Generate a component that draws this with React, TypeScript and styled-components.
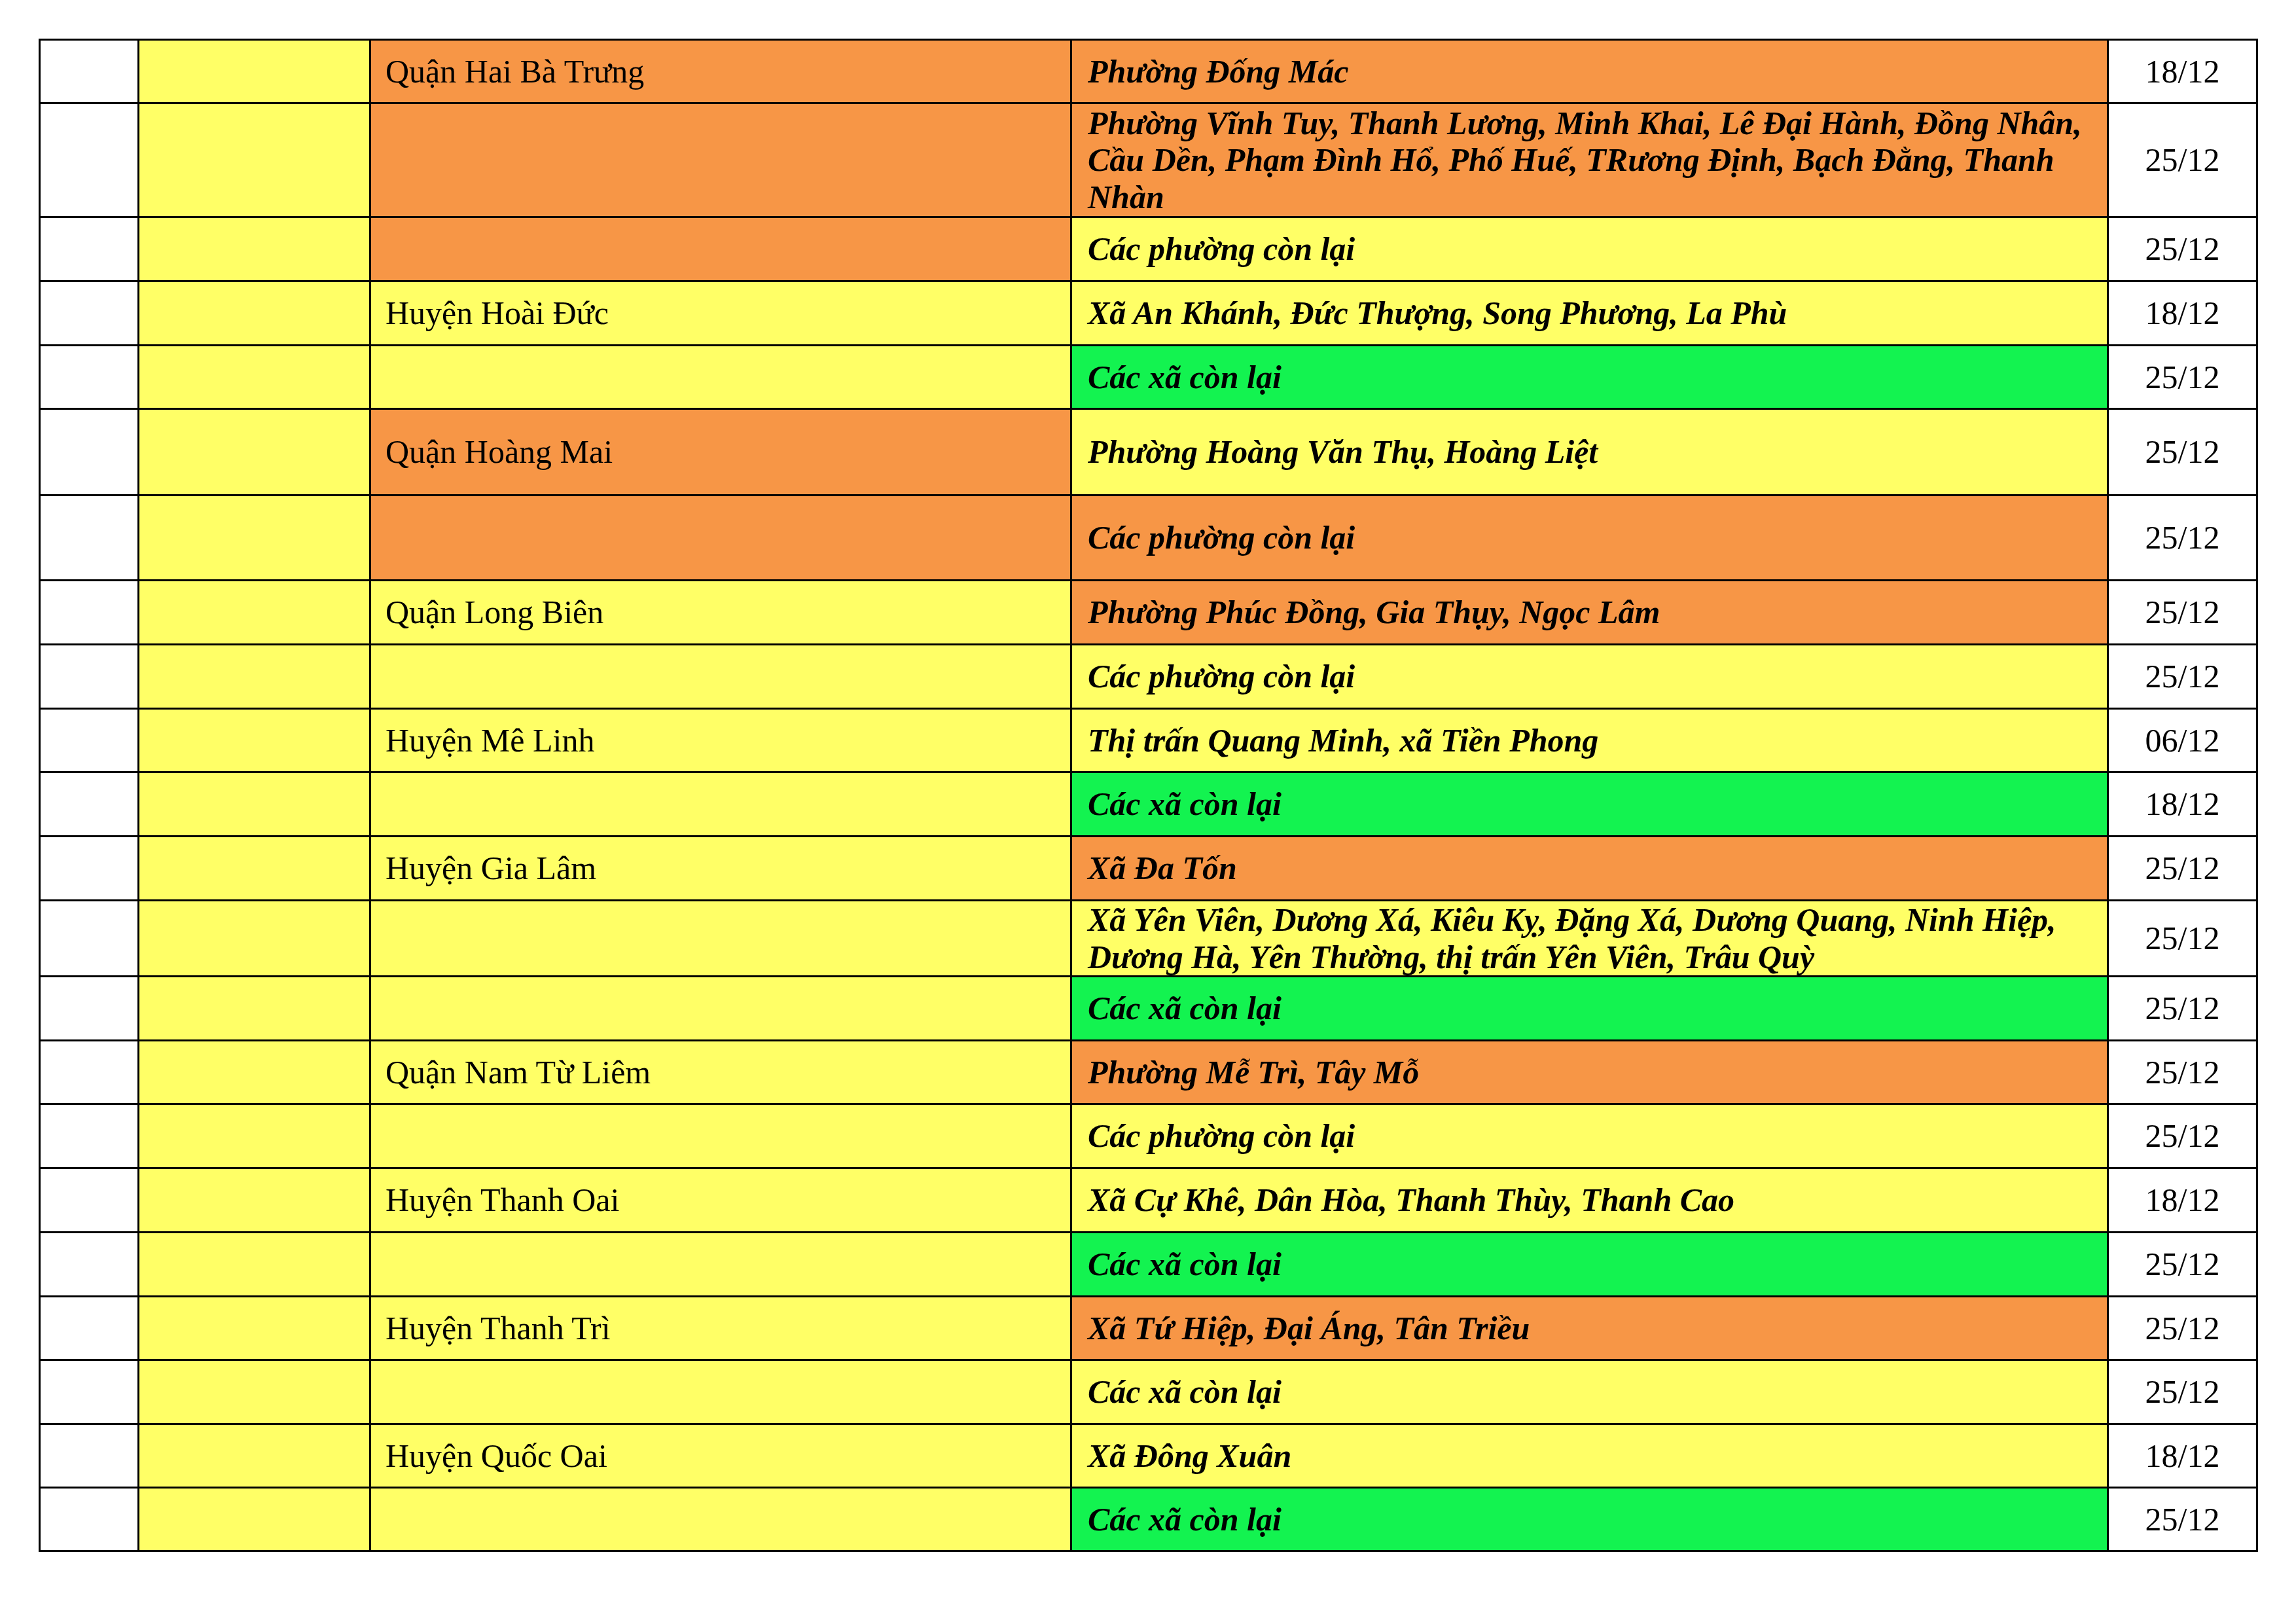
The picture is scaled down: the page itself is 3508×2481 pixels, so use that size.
import React from "react";
import styled, { createGlobalStyle } from "styled-components";

const YELLOW = "#ffff66";
const ORANGE = "#f79646";
const GREEN = "#13f350";
const WHITE = "#ffffff";

const GlobalStyle = createGlobalStyle`
  html, body {
    margin: 0;
    padding: 0;
    background: #fff;
  }
  body {
    font-family: "Liberation Serif", "Times New Roman", serif;
    color: #000;
  }
`;

const Page = styled.div`
  width: 3508px;
  height: 2481px;
  box-sizing: border-box;
  padding: 59px 0 0 59px;
  background: #fff;
`;

const Sheet = styled.table`
  border-collapse: collapse;
  table-layout: fixed;
  width: 3388px;
`;

const Row = styled.tr<{ $h: number }>`
  height: ${(p) => p.$h}px;
`;

const Cell = styled.td<{ $bg: string }>`
  border: 3px solid #000;
  background: ${(p) => p.$bg};
  padding: 0 22px;
  vertical-align: middle;
  font-size: 50px;
  line-height: 56.5px;
  overflow: hidden;
`;

const WardCell = styled(Cell)`
  font-weight: 700;
  font-style: italic;
  padding: 0 24px;
`;

const DateCell = styled(Cell)`
  text-align: center;
  padding: 0;
`;

type Line = {
  district: string;
  districtBg: string;
  ward: string;
  wardBg: string;
  date: string;
  h: number;
};

const rows: Line[] = [
  { district: "Quận Hai Bà Trưng", districtBg: ORANGE, ward: "Phường Đống Mác", wardBg: ORANGE, date: "18/12", h: 97 },
  {
    district: "",
    districtBg: ORANGE,
    ward: "Phường Vĩnh Tuy, Thanh Lương, Minh Khai, Lê Đại Hành, Đồng Nhân, Cầu Dền, Phạm Đình Hổ, Phố Huế, TRương Định, Bạch Đằng, Thanh Nhàn",
    wardBg: ORANGE,
    date: "25/12",
    h: 174,
  },
  { district: "", districtBg: ORANGE, ward: "Các phường còn lại", wardBg: YELLOW, date: "25/12", h: 98 },
  { district: "Huyện Hoài Đức", districtBg: YELLOW, ward: "Xã An Khánh, Đức Thượng, Song Phương, La Phù", wardBg: YELLOW, date: "18/12", h: 98 },
  { district: "", districtBg: YELLOW, ward: "Các xã còn lại", wardBg: GREEN, date: "25/12", h: 97 },
  { district: "Quận Hoàng Mai", districtBg: ORANGE, ward: "Phường Hoàng Văn Thụ, Hoàng Liệt", wardBg: YELLOW, date: "25/12", h: 132 },
  { district: "", districtBg: ORANGE, ward: "Các phường còn lại", wardBg: ORANGE, date: "25/12", h: 130 },
  { district: "Quận Long Biên", districtBg: YELLOW, ward: "Phường Phúc Đồng, Gia Thụy, Ngọc Lâm", wardBg: ORANGE, date: "25/12", h: 98 },
  { district: "", districtBg: YELLOW, ward: "Các phường còn lại", wardBg: YELLOW, date: "25/12", h: 98 },
  { district: "Huyện Mê Linh", districtBg: YELLOW, ward: "Thị trấn Quang Minh, xã Tiền Phong", wardBg: YELLOW, date: "06/12", h: 97 },
  { district: "", districtBg: YELLOW, ward: "Các xã còn lại", wardBg: GREEN, date: "18/12", h: 98 },
  { district: "Huyện Gia Lâm", districtBg: YELLOW, ward: "Xã Đa Tốn", wardBg: ORANGE, date: "25/12", h: 98 },
  {
    district: "",
    districtBg: YELLOW,
    ward: "Xã Yên Viên, Dương Xá, Kiêu Kỵ, Đặng Xá, Dương Quang, Ninh Hiệp, Dương Hà, Yên Thường, thị trấn Yên Viên, Trâu Quỳ",
    wardBg: YELLOW,
    date: "25/12",
    h: 116,
  },
  { district: "", districtBg: YELLOW, ward: "Các xã còn lại", wardBg: GREEN, date: "25/12", h: 98 },
  { district: "Quận Nam Từ Liêm", districtBg: YELLOW, ward: "Phường Mễ Trì, Tây Mỗ", wardBg: ORANGE, date: "25/12", h: 97 },
  { district: "", districtBg: YELLOW, ward: "Các phường còn lại", wardBg: YELLOW, date: "25/12", h: 98 },
  { district: "Huyện Thanh Oai", districtBg: YELLOW, ward: "Xã Cự Khê, Dân Hòa, Thanh Thùy, Thanh Cao", wardBg: YELLOW, date: "18/12", h: 98 },
  { district: "", districtBg: YELLOW, ward: "Các xã còn lại", wardBg: GREEN, date: "25/12", h: 98 },
  { district: "Huyện Thanh Trì", districtBg: YELLOW, ward: "Xã Tứ Hiệp, Đại Áng, Tân Triều", wardBg: ORANGE, date: "25/12", h: 97 },
  { district: "", districtBg: YELLOW, ward: "Các xã còn lại", wardBg: YELLOW, date: "25/12", h: 98 },
  { district: "Huyện Quốc Oai", districtBg: YELLOW, ward: "Xã Đông Xuân", wardBg: YELLOW, date: "18/12", h: 97 },
  { district: "", districtBg: YELLOW, ward: "Các xã còn lại", wardBg: GREEN, date: "25/12", h: 97 },
];

const App = () => {
  return (
    <Page>
      <GlobalStyle />
      <Sheet>
        <colgroup>
          <col width={151} />
          <col width={354} />
          <col width={1071} />
          <col width={1584} />
          <col width={228} />
        </colgroup>
        <tbody>
          {rows.map((r, i) => (
            <Row key={i} $h={r.h}>
              <Cell $bg={WHITE} />
              <Cell $bg={YELLOW} />
              <Cell $bg={r.districtBg}>{r.district}</Cell>
              <WardCell $bg={r.wardBg}>{r.ward}</WardCell>
              <DateCell $bg={WHITE}>{r.date}</DateCell>
            </Row>
          ))}
        </tbody>
      </Sheet>
    </Page>
  );
};

export default App;
